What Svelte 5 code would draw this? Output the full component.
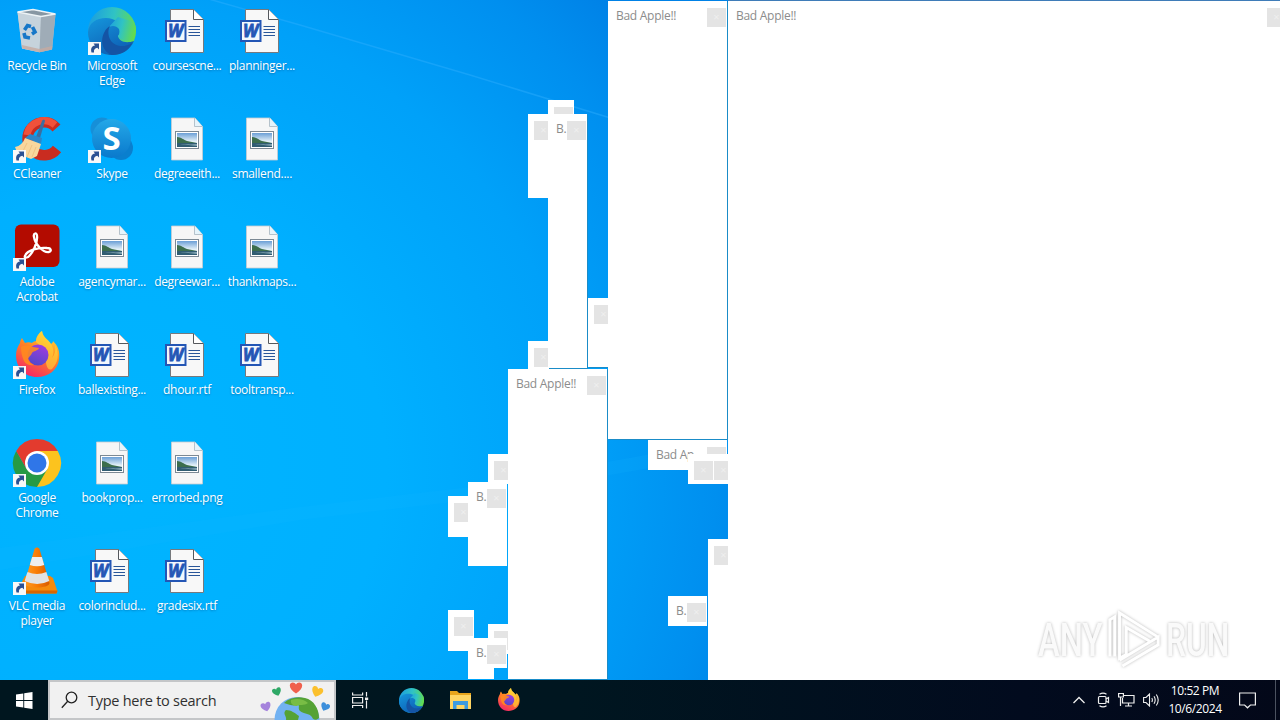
<script lang="ts">
  type IconKind = "bin" | "edge" | "ccleaner" | "skype" | "acrobat" | "firefox" | "chrome" | "vlc" | "word" | "image"

  interface Shortcut {
    label: string
    icon: IconKind
    link?: boolean
  }

  interface Popup {
    x: number
    y: number
    w: number
    h: number
    title?: string
    framed?: boolean
  }

  // Column by column, top to bottom
  const shortcuts: Shortcut[] = [
    { label: "Recycle Bin", icon: "bin" },
    { label: "CCleaner", icon: "ccleaner", link: true },
    { label: "Adobe\nAcrobat", icon: "acrobat", link: true },
    { label: "Firefox", icon: "firefox", link: true },
    { label: "Google\nChrome", icon: "chrome", link: true },
    { label: "VLC media\nplayer", icon: "vlc", link: true },
    { label: "Microsoft\nEdge", icon: "edge", link: true },
    { label: "Skype", icon: "skype", link: true },
    { label: "agencymar...", icon: "image" },
    { label: "ballexisting...", icon: "word" },
    { label: "bookprop...", icon: "image" },
    { label: "colorinclud...", icon: "word" },
    { label: "coursescne...", icon: "word" },
    { label: "degreeeith...", icon: "image" },
    { label: "degreewar...", icon: "image" },
    { label: "dhour.rtf", icon: "word" },
    { label: "errorbed.png", icon: "image" },
    { label: "gradesix.rtf", icon: "word" },
    { label: "planninger...", icon: "word" },
    { label: "smallend....", icon: "image" },
    { label: "thankmaps...", icon: "image" },
    { label: "tooltransp...", icon: "word" },
  ]

  // Back to front
  const popups: Popup[] = [
    { x: 548, y: 100, w: 26, h: 30 },
    { x: 528, y: 114, w: 26, h: 84 },
    { x: 528, y: 341, w: 26, h: 28 },
    { x: 548, y: 114, w: 39, h: 254, title: "B.", framed: true },
    { x: 588, y: 298, w: 26, h: 69, framed: true },
    { x: 488, y: 454, w: 26, h: 30 },
    { x: 448, y: 496, w: 26, h: 41 },
    { x: 468, y: 482, w: 39, h: 84, title: "B." },
    { x: 448, y: 610, w: 26, h: 41 },
    { x: 488, y: 624, w: 26, h: 30 },
    { x: 468, y: 640, w: 26, h: 39 },
    { x: 468, y: 638, w: 39, h: 30, title: "B." },
    { x: 508, y: 369, w: 99, h: 310, title: "Bad Apple!!", framed: true },
    { x: 608, y: 1, w: 119, h: 438, title: "Bad Apple!!", framed: true },
    { x: 648, y: 440, w: 79, h: 30, title: "Bad Ap..." },
    { x: 708, y: 454, w: 26, h: 30 },
    { x: 688, y: 454, w: 26, h: 30 },
    { x: 708, y: 539, w: 26, h: 141 },
    { x: 668, y: 596, w: 39, h: 30, title: "B." },
    { x: 728, y: 1, w: 559, h: 679, title: "Bad Apple!!", framed: true },
  ]

  const hearts = [
    { x: 218, y: 27, size: 9, color: "#a583dc", tilt: -15 },
    { x: 229, y: 12, size: 8, color: "#2fa866", tilt: -20 },
    { x: 248, y: 8, size: 11, color: "#f0604d", tilt: 0 },
    { x: 269, y: 12, size: 10, color: "#fbc02d", tilt: 20 },
    { x: 277, y: 27, size: 8, color: "#3d8fdb", tilt: 25 },
  ]
</script>

{#snippet edgeLogo()}
  <circle cx="24" cy="24" r="24" fill="url(#edgeTop)" />
  <path d="M0 25C1 16 8 11 18 11c9 0 15 5 15 12 0 3-2 5-3 6 1 5 7 8 16 5-4 9-12 14-22 14C10 48 0 38 0 25z" fill="url(#edgeBlue)" />
  <path d="M19 22c3-4 9-4 12 0 1 3 0 6-1 7 2 5 10 5 14 3 3-3 4-6 4-10 0-2-1-5-2-7L30 10z" fill="url(#edgeTop)" />
  <path d="M24 48c-9-3-13-14-7-24 1-2 3-4 5-5-2 3-2 7-1 11 3 9 14 12 23 6-4 8-11 12-20 12z" fill="#1454a5" />
{/snippet}

{#snippet firefoxLogo()}
  <path d="M3 24c0-5 2-9 4-12 0-2 1-4 2-5l3 5c2-1 5-1 7 0 1-1 2-2 4-2 0-4 3-8 6-10 1 7 6 8 9 13 2-1 2-3 2-3 5 5 7 10 6 18-1 11-11 18-22 18C12 46 3 37 3 24z" fill="url(#foxBody)" />
  <path d="M29 0c1 7 6 8 9 13 3 5 3 10 1 14 3-4 4-8 3-13 5 9 3 18-3 24-5 3-7-7-6-13 0-6-5-9-10-14 0-5 3-9 6-11z" fill="#ffd93b" opacity=".6" />
  <circle cx="25" cy="24" r="10.5" fill="url(#foxCore)" />
  <path d="M8 16c4-2 9-1 12 0l6 1c-1 3-6 3-7 5-1 3-3 3-4 6 1 3 3 5 6 6-3 1-8 0-10-4-2-4-3-9-3-14z" fill="#ff8a1f" opacity=".9" />
{/snippet}

{#snippet icon(kind: IconKind)}
  {#if kind === "bin"}
    <path d="M4.500 5 20 2.500 42.500 7l-3.500 35.500-12.500 2.800L9 41.500z" fill="#b7c3cc" />
    <path d="M4.500 5 28 9.500l-1.500 35.800L9 41.500z" fill="#c6d3dc" />
    <path d="M28 9.500 42.500 7 39 42.500l-12.500 2.800z" fill="#9facb7" />
    <path d="M4.500 5 20 2.500 42.500 7 28 9.500z" fill="#8797a3" stroke="#edf3f6" stroke-width="1.300" />
    <path d="m9 38 .3 3.500 17.200 3.800 12.500-2.800.4-3.500-13 3z" fill="#c6aaa0" opacity=".8" />
    <g fill="none" stroke="#1677c8" stroke-width="3.600">
      <path d="m11.500 23 3-4.500 3.500 1" /><path d="m19.500 20 2.500 5-3 2" /><path d="m17 31-5-1-1-4" />
    </g>
  {:else if kind === "edge"}
    {@render edgeLogo()}
  {:else if kind === "ccleaner"}
    <path d="M43.500 13A16.500 16.500 0 1 0 44 34" fill="none" stroke="#c92c20" stroke-width="10.500" />
    <path d="M42 10A17 17 0 0 0 14 20" fill="none" stroke="#f0513b" stroke-width="7" />
    <path d="M29 6c1-2 3-1 3 0l-5 17-4-1z" fill="#3b6ea0" />
    <path d="m17 19 12 4-1 6-16-6z" fill="#2b86c9" />
    <path d="m12 23 16 6-4 12-6 3-5-2-8-2-3-8c5-1 8-4 10-9z" fill="#f8d79d" />
    <path d="m14 28-5 10m10-8-5 12m9-10-4 10" stroke="#efc283" fill="none" />
  {:else if kind === "skype"}
    <circle cx="14" cy="14" r="11.500" fill="#168fd8" />
    <circle cx="33" cy="33" r="12" fill="#0a7fce" />
    <circle cx="23.500" cy="23.500" r="19.500" fill="url(#skypeFill)" />
    <text x="23.500" y="35" class="skype-letter">S</text>
  {:else if kind === "acrobat"}
    <rect x="2" y="1.500" width="44.500" height="42.500" rx="6" fill="#b30b00" />
    <path d="M12 33c2-6 14-9 22-8 4 0 5 3 2 4-6 1-14-8-15-15-1-4 3-5 3-1 1 7-5 18-9 21-2 1-4 1-3-1z" fill="none" stroke="#fff" stroke-width="2.300" />
  {:else if kind === "firefox"}
    {@render firefoxLogo()}
  {:else if kind === "chrome"}
    <path d="M24 24V12h20.800A24 24 0 0 1 24 48z" fill="#fcc31e" />
    <path d="M3.200 12A24 24 0 0 0 24 48l10.400-18L13.600 30z" fill="#269a45" />
    <path d="M24 12h20.800a24 24 0 0 0-41.600 0l10.400 18z" fill="#e33b2e" />
    <circle cx="24" cy="24" r="12" fill="#fff" />
    <circle cx="24" cy="24" r="9.500" fill="#2f76e8" />
  {:else if kind === "vlc"}
    <path d="M12 29h25l3 2 4.500 13.500-1 2H5l-1-2z" fill="#f58a0b" />
    <path d="M4 43.500h40.500l-1 3H5z" fill="#d86500" />
    <path d="M21.500 2c1-2 4-2 5 0l10 34c0 6-25 6-25 0z" fill="url(#cone)" />
    <path d="m19.100 10 9.800 0 2.300 8q-7.200 2.500-14.400 0z" fill="#eee" />
    <path d="m13.700 27 .9-2q9.400 4 18.800 0l2.900 9q-12 6-24.600 0z" fill="#e2e2e2" />
  {:else if kind === "word"}
    <path d="M7.500 2.500h23l10 10v33h-33z" fill="#f8f8f8" stroke="#76797d" />
    <path d="M30.500 2.500v10h10" fill="#fff" stroke="#55585c" />
    <path d="M25.500 19.500h11.500m-11.500 3h11.500m-11.500 3h11.500m-11.500 3h11.500" stroke="#2a5699" stroke-width="1" />
    <rect x="3" y="14" width="19.500" height="20" fill="#f3f7fd" stroke="#2456b5" stroke-width="2" />
    <text x="12.700" y="30" class="word-letter">W</text>
  {:else if kind === "image"}
    <path d="M8.500 3h23.500l7.500 8.500v33.500h-31z" fill="#f6f6f6" stroke="#c9ccd0" stroke-width=".8" />
    <path d="M31.500 3v8.500h8" fill="#e6f4fb" stroke="#a6b5bf" stroke-width=".8" />
    <rect x="12.500" y="16.500" width="23" height="17" fill="#fff" stroke="#7c8994" />
    <rect x="14" y="18" width="20" height="14" fill="url(#sky)" />
    <path d="M14 22c4 0 7 3 10 4s7 1 10 2v1H14z" fill="#3c6e4d" />
    <path d="M14 28h20v4H14z" fill="#315d72" />
    <path d="M17 29c5 0 10 1 17 0v2z" fill="#86a7b5" />
  {/if}
{/snippet}

<svg class="defs" width="0" height="0" aria-hidden="true">
  <defs>
    <linearGradient id="edgeTop" x1="0" y1="0.300" x2="1" y2="0.500">
      <stop offset="0" stop-color="#1b9de0" /><stop offset=".5" stop-color="#30c3c4" /><stop offset="1" stop-color="#65dc4a" />
    </linearGradient>
    <linearGradient id="edgeBlue" x1="0" y1="0" x2="0.600" y2="1">
      <stop offset="0" stop-color="#1597dc" /><stop offset="1" stop-color="#0d5fb5" />
    </linearGradient>
    <linearGradient id="foxBody" x1="0.800" y1="0" x2="0.300" y2="1">
      <stop offset="0" stop-color="#ffe23b" /><stop offset=".45" stop-color="#ff8523" /><stop offset="1" stop-color="#f52667" />
    </linearGradient>
    <linearGradient id="foxCore" x1="0.700" y1="0" x2="0.300" y2="1">
      <stop offset="0" stop-color="#a03be0" /><stop offset="1" stop-color="#5148c8" />
    </linearGradient>
    <linearGradient id="skypeFill" x1="0" y1="0" x2="0" y2="1">
      <stop offset="0" stop-color="#24a8e8" /><stop offset="1" stop-color="#0a79cc" />
    </linearGradient>
    <linearGradient id="cone" x1="0" y1="0" x2="1" y2="0">
      <stop offset="0" stop-color="#ff9d24" /><stop offset=".5" stop-color="#f97c05" /><stop offset="1" stop-color="#d65a00" />
    </linearGradient>
    <linearGradient id="sky" x1="0" y1="0" x2="0" y2="1">
      <stop offset="0" stop-color="#6b9fd6" /><stop offset=".6" stop-color="#e4f1f8" />
    </linearGradient>
  </defs>
</svg>

<div class="screen">
  <main class="desktop">
    <svg class="rays" viewBox="0 0 1280 680" aria-hidden="true">
      <path d="M170-12 300 25 470 75 728 154" fill="none" stroke="#35b1ff" stroke-opacity=".4" stroke-width="1.500" />
      <path d="M0 548 300 507 470 487 728 440V454L470 500 300 520 0 570z" fill="#19baff" fill-opacity=".13" />
    </svg>

    <div class="shortcuts">
      {#each shortcuts as item}
        <div class="shortcut">
          <svg class="shortcut-icon" width="48" height="48" viewBox="0 0 48 48">
            {@render icon(item.icon)}
            {#if item.link}
              <rect x="0" y="35" width="13" height="13" fill="#f8f8f8" />
              <path d="M3.500 45.500c-1-4 0-6.500 3.500-7l-1.500-2H11v6L9.300 40.700C7 41 5.500 42.500 6 45.500z" fill="#2b5193" />
            {/if}
          </svg>
          <span class="shortcut-label">{item.label}</span>
        </div>
      {/each}
    </div>

    {#each popups as p}
      <section class="popup" class:framed={p.framed} style="left: {p.x}px; top: {p.y}px; width: {p.w}px; height: {p.h}px">
        <span class="popup-title">{p.title ?? ""}</span>
        <span class="popup-close">×</span>
      </section>
    {/each}

    <div class="watermark">
      <span class="any">ANY</span>
      <svg width="58" height="64" viewBox="0 0 58 64">
        <path d="M4 49V11l5-3v41M14 51V4l40 25M14 11v40l7-4V19l24 14M17 59l37-22v-8L14 53" fill="none" stroke="#fff" stroke-width="3" />
      </svg>
      <span class="run">RUN</span>
    </div>
  </main>

  <footer class="taskbar">
    <div class="start">
      <svg width="17" height="17" viewBox="0 0 17 17" fill="#fff">
        <path d="M0 2.500 7.300 1.400V8H0zM8.200 1.300 16.500 0v8H8.200zM0 8.900h7.300v6.700L0 14.500zM8.200 8.900h8.300v8l-8.300-1.200z" />
      </svg>
    </div>

    <div class="search">
      <svg width="17" height="18" viewBox="0 0 17 18" fill="none" stroke="#222" stroke-width="1.300">
        <circle cx="10.500" cy="6.500" r="5.300" /><path d="M6.700 10.300.800 16.800" />
      </svg>
      <span class="search-text">Type here to search</span>
      <svg class="search-art" width="288" height="40" viewBox="0 0 288 40">
        <circle cx="249" cy="39.500" r="22.500" fill="#72b2f2" />
        <path d="M236 23c5-5 13-7 21-5 9 2 14 11 14 20-3 3-6 2-7-1-3-4-8-3-12-6-3-3 1-6-3-6-4 1-7 0-10-1zM238 30c5 0 9 3 13 6l-1 4h-12c1-4-4-6 0-10z" fill="#55a234" />
        <path d="M243 20c6-2 13-1 17 3-4 3-9 1-11 3-3 0-7-2-6-6z" fill="#78bd45" />
        {#each hearts as h}
          <path
            d="M0 4C-3 2-4.500 0-4.500-1.800-4.500-4.500-1-4.800 0-2.500 1-4.800 4.500-4.500 4.500-1.800 4.500 0 3 2 0 4z"
            fill={h.color}
            transform="translate({h.x} {h.y}) rotate({h.tilt}) scale({h.size / 8})"
          />
        {/each}
      </svg>
    </div>

    <div class="pinned">
      <svg width="17" height="17" viewBox="0 0 17 17" fill="none" stroke="#eee" stroke-width="1.200">
        <path d="M.6.500v2.500h10V.500M.6 16v-2.500h10V16M.6 5.500h10v5.500H.6zM14.500 0v4.500m0 4v8" /><path d="M13 5.500h3.200v2.500H13z" fill="#eee" stroke="none" />
      </svg>
      <svg width="25" height="25" viewBox="0 0 48 48">{@render edgeLogo()}</svg>
      <svg width="23" height="20" viewBox="0 0 23 20">
        <path d="M1 1h7l2 2h12v4H1z" fill="#e8a51c" />
        <path d="M1 5h21v14H1z" fill="#ffd563" />
        <path d="M4 19v-8h15v8h-3.500v-4h-8v4z" fill="#3d9be0" />
      </svg>
      <svg width="25" height="24" viewBox="0 0 48 48">{@render firefoxLogo()}</svg>
    </div>

    <div class="tray">
      <svg width="12" height="8" viewBox="0 0 12 8" fill="none" stroke="#eee" stroke-width="1.300"><path d="m.5 7 5.500-5.500L11.500 7" /></svg>
      <svg width="13" height="16" viewBox="0 0 13 16" fill="none" stroke="#eee" stroke-width="1.200">
        <rect x="1.500" y="4.500" width="7.500" height="7" rx="1" /><path d="m9 7 2.500-1.500v5L9 9M2.500 2.300Q6 0 9.500 2.300M2.500 13.700Q6 16 9.500 13.700" />
      </svg>
      <svg width="17" height="16" viewBox="0 0 17 16" fill="none" stroke="#eee" stroke-width="1.200">
        <path d="M6 3.500h10v7.500H4.500V6M7 14h7m-3.500-3v3M.6 1.500h4.800V5H.6zM2.500 5v9" />
      </svg>
      <svg width="17" height="14" viewBox="0 0 17 14" fill="none" stroke="#eee" stroke-width="1.100">
        <path d="M.6 4.500H3L6.500 1v12L3 9.500H.6zM8.800 5q1.200 2 0 4M11 3.300q2.400 3.700 0 7.400M13.300 1.500q3.800 5.500 0 11" />
      </svg>
      <div class="clock"><span>10:52 PM</span><span>10/6/2024</span></div>
      <svg class="notify" width="17" height="17" viewBox="0 0 17 17" fill="none" stroke="#eee" stroke-width="1.200">
        <path d="M.6 1h15.800v12h-5l-2.900 2.800L5.600 13h-5z" />
      </svg>
    </div>
  </footer>
</div>

<style>
  :global(body) {
    margin: 0;
  }

  .defs {
    position: absolute;
  }

  .screen {
    width: 1280px;
    height: 720px;
    display: flex;
    flex-direction: column;
    overflow: hidden;
    font-family: "Open Sans", "Noto Sans", sans-serif;
  }

  .desktop {
    position: relative;
    flex: 1;
    overflow: hidden;
    background: radial-gradient(ellipse 690px 690px at 110px 470px, #00b5ff 0%, #00b0ff 40%, #00a1f9 68%, #008fef 88%, #0081e6 100%);
  }

  .rays {
    position: absolute;
    inset: 0;
  }

  .shortcuts {
    display: grid;
    grid-template-rows: repeat(6, 108px);
    grid-auto-columns: 75px;
    grid-auto-flow: column;
    width: 300px;
  }

  .shortcut {
    position: relative;
    display: flex;
    flex-direction: column;
    align-items: center;
    padding: 7px 1px 0 0;
  }

  .shortcut-icon {
    flex-shrink: 0;
    overflow: visible;
  }

  .shortcut-label {
    margin-top: 3px;
    font-size: 12px;
    line-height: 15px;
    letter-spacing: -0.3px;
    color: #fff;
    text-align: center;
    white-space: pre;
    text-shadow: 0 1px 2px rgba(0, 50, 100, 0.4);
  }

  .skype-letter {
    font: bold 33px "Open Sans", sans-serif;
    fill: #fff;
    text-anchor: middle;
  }

  .word-letter {
    font: italic bold 17px "Open Sans", sans-serif;
    fill: #2456b5;
    stroke: #2456b5;
    stroke-width: 0.8px;
    text-anchor: middle;
  }

  .popup {
    position: absolute;
    display: flex;
    justify-content: space-between;
    align-items: flex-start;
    box-sizing: border-box;
    padding: 7px 1px 0 6px;
    background: #fff;
    overflow: hidden;
  }

  .popup.framed {
    box-shadow: 1px 1px 0 #1a8cc8, 0 -1px 0 #3f7cb8;
  }

  .popup.framed:not(:last-of-type) {
    box-shadow: 1px 1px 0 #1a8cc8;
  }

  .popup-title {
    flex: 1;
    min-width: 0;
    padding-left: 2px;
    font-size: 12px;
    line-height: 16px;
    letter-spacing: -0.28px;
    color: #8c8c8c;
    white-space: nowrap;
    overflow: hidden;
  }

  .popup-title:empty {
    padding: 0;
  }

  .popup-close {
    flex: 0 0 19px;
    height: 19px;
    background: #e4e4e4;
    color: #efefef;
    font-size: 11px;
    line-height: 18px;
    text-align: center;
  }

  .watermark {
    position: absolute;
    left: 1038px;
    top: 608px;
    width: 196px;
    height: 64px;
    display: flex;
    align-items: center;
    color: #fafafa;
    filter: drop-shadow(0 0 1.5px rgba(0, 0, 0, 0.28));
  }

  .watermark span {
    width: 68px;
    font: 500 46px/64px Roboto, sans-serif;
    transform: scaleX(0.71);
    transform-origin: left;
  }

  .watermark .run {
    margin-left: 4px;
    transform: scaleX(0.69);
  }

  .taskbar {
    height: 40px;
    display: flex;
    background: linear-gradient(90deg, #00161f 0%, #001620 45%, #020b1e 80%, #030819 100%);
  }

  .start {
    width: 48px;
    display: flex;
    align-items: center;
    justify-content: center;
  }

  .search {
    position: relative;
    box-sizing: border-box;
    width: 288px;
    display: flex;
    align-items: center;
    padding-left: 11px;
    gap: 10px;
    background: #f1f1f1;
    border: 2px solid #c4c6c8;
  }

  .search-text {
    font-size: 14.5px;
    letter-spacing: -0.27px;
    color: #303030;
    white-space: nowrap;
  }

  .search-art {
    position: absolute;
    left: -2px;
    top: -2px;
  }

  .pinned {
    display: flex;
    align-items: center;
    padding-left: 16px;
    gap: 25px;
  }

  .pinned svg:first-child {
    margin-right: 5px;
  }

  .pinned svg:last-child {
    margin-left: -1px;
  }

  .tray {
    margin-left: auto;
    display: flex;
    align-items: center;
    gap: 8px;
    margin-right: 4px;
    padding-right: 19px;
    border-right: 1px solid #4b5260;
    color: #fff;
  }

  .tray svg:first-child {
    margin-right: 4px;
  }

  .clock {
    width: 54px;
    display: flex;
    flex-direction: column;
    align-items: center;
    font-size: 12px;
    line-height: 18px;
    letter-spacing: -0.4px;
    white-space: nowrap;
  }

  .notify {
    margin-left: 9px;
  }
</style>
